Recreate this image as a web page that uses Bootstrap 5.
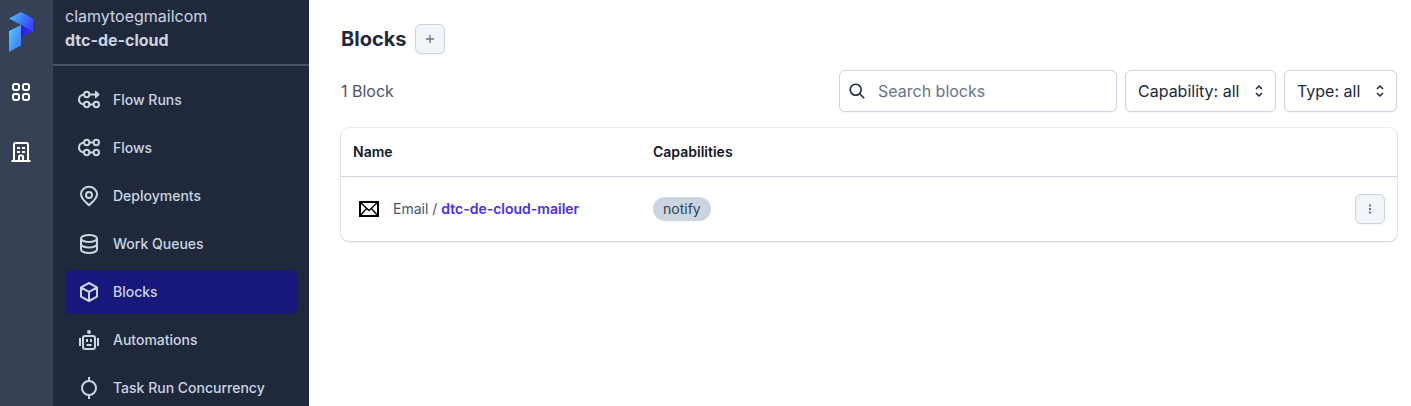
<!DOCTYPE html>
<html lang="en">
<head>
<meta charset="utf-8">
<meta name="viewport" content="width=device-width, initial-scale=1">
<title>Blocks</title>
<link href="https://cdn.jsdelivr.net/npm/bootstrap@5.3.0/dist/css/bootstrap.min.css" rel="stylesheet">
<style>
body{font-family:Inter,"Liberation Sans",sans-serif;font-size:16px;line-height:24px;color:#1e293b;height:100vh;overflow:hidden;background:#fff}
svg{display:block;flex:none}
.rail{width:53px;background:#374155;color:#fff}
.rail .logo{margin:12px 0 0 9px}
.rail .apps{margin:28px 0 0 9px}
.rail .org{margin:36px 0 0 9px}
.side{width:256px;background:#20293b;color:#cbd5e1}
.account{height:66px;padding:4px 12px 0;border-bottom:2px solid #475569}
.menu{padding:12px 12px 0;gap:4px}
.menu .nav-link{height:44px;padding:0 12px;gap:12px;font-size:14px;line-height:20px;font-weight:500;color:#cbd5e1;border-radius:6px}
.menu .nav-link.active{background:#18187c}
.page{padding:24px 14px 0 32px}
.page h1{font-size:20px;line-height:28px;font-weight:700;margin:0}
.sq{width:30px;height:30px;border:1px solid #cbd5e1;border-radius:6px;background:#f1f5f9;color:#64748b;box-shadow:0 1px 2px rgba(0,0,0,.05)}
.tools{margin-top:16px;height:42px}
.muted{color:#475569}
.field{height:42px;border:1px solid #cbd5e1;border-radius:6px;box-shadow:0 1px 2px rgba(0,0,0,.05);background:#fff;color:#1e293b}
.search{width:278px;padding-left:7px;gap:11px}
.search input{color:#1e293b;font-size:16px;line-height:24px;padding:0}
.search input::placeholder{color:#64748b;opacity:1}
.pick{padding:0 6px 0 12px}
.panel{margin-top:16px;height:113px;border-radius:8px;box-shadow:0 0 0 1px rgba(0,0,0,.08),0 1px 2px rgba(0,0,0,.12);font-size:14px;line-height:20px}
.cols{height:49px;border-bottom:1px solid #cbd5e1;font-weight:600;color:#111827}
.cols,.item{padding:0 12px}
.c1{width:300px}
.item .c1{gap:12px}
.item a{color:#4b2ef5;font-weight:600;text-decoration:none}
.tag{height:24px;padding:0 10px;background:#cbd5e1;color:#334155}
</style>
</head>
<body class="d-flex">
<aside class="rail flex-shrink-0">
  <svg class="logo" width="24" height="40" viewBox="0 0 24 40">
    <defs>
      <linearGradient id="top" x1="0" y1="0" x2="1" y2=".55"><stop stop-color="#55cdfc"/><stop offset=".55" stop-color="#3d7fff"/><stop offset="1" stop-color="#3d48ff"/></linearGradient>
      <linearGradient id="leg" x1="0" y1="0" x2="1" y2="1"><stop stop-color="#55cfff"/><stop offset="1" stop-color="#3a70ff"/></linearGradient>
      <linearGradient id="fold"><stop stop-color="#2e1cc8"/><stop offset="1" stop-color="#3b30ff"/></linearGradient>
    </defs>
    <path d="M0 6.500 12 0l12 6.500v12.700L12 13z" fill="url(#top)"/>
    <path d="M12 13l12 6.200L12 25z" fill="url(#fold)"/>
    <path d="M0 19l12-6v20.500L0 40z" fill="url(#leg)"/>
  </svg>
  <svg class="apps" width="24" height="24" viewBox="0 0 24 24" fill="none" stroke="currentColor" stroke-width="2"><rect x="4" y="4" width="6" height="6" rx="2"/><rect x="14" y="4" width="6" height="6" rx="2"/><rect x="4" y="14" width="6" height="6" rx="2"/><rect x="14" y="14" width="6" height="6" rx="2"/></svg>
  <svg class="org" width="24" height="24" viewBox="0 0 24 24" fill="none" stroke="currentColor" stroke-width="2"><path d="M2.500 21h19M5 21V4.500a1.500 1.500 0 0 1 1.500-1.500h11a1.500 1.500 0 0 1 1.500 1.500V21M10 21v-4.500a1 1 0 0 1 1-1h2a1 1 0 0 1 1 1V21M8 8h3M13 8h3M8 12h3M13 12h3"/></svg>
</aside>
<aside class="side flex-shrink-0">
  <div class="account"><div>clamytoegmailcom</div><div class="fw-bold">dtc-de-cloud</div></div>
  <nav class="menu nav flex-column flex-nowrap">
    <a class="nav-link d-flex align-items-center" href="#"><svg width="24" height="24" viewBox="0 0 24 24" fill="none" stroke="currentColor" stroke-width="2"><circle cx="9.700" cy="6.500" r="2.700"/><circle cx="9.700" cy="16.500" r="2.700"/><circle cx="19.300" cy="16.500" r="2.700"/><path d="M7 6.500C3.500 7 2 9 2 11.500s1.500 4.500 5 5M12.400 6.500H19M12.400 16.500h4.200"/><path d="M18.500 3 22.300 6.500l-3.800 3.500z" fill="currentColor" stroke-width="1"/></svg>Flow Runs</a>
    <a class="nav-link d-flex align-items-center" href="#"><svg width="24" height="24" viewBox="0 0 24 24" fill="none" stroke="currentColor" stroke-width="2"><circle cx="9.700" cy="6.500" r="2.700"/><circle cx="19.300" cy="6.500" r="2.700"/><circle cx="9.700" cy="16.500" r="2.700"/><circle cx="19.300" cy="16.500" r="2.700"/><path d="M7 6.500C3.500 7 2 9 2 11.500s1.500 4.500 5 5M12.400 6.500h4.200M12.400 16.500h4.200"/></svg>Flows</a>
    <a class="nav-link d-flex align-items-center" href="#"><svg width="24" height="24" viewBox="0 0 24 24" fill="none" stroke="currentColor" stroke-width="2" stroke-linejoin="round"><path d="M12 21.200c-2.600-2.100-8-6.200-8-11.100a8 7.300 0 0 1 16 0c0 4.900-5.400 9-8 11.100z"/><circle cx="12" cy="11" r="3"/></svg>Deployments</a>
    <a class="nav-link d-flex align-items-center" href="#"><svg width="24" height="24" viewBox="0 0 24 24" fill="none" stroke="currentColor" stroke-width="2"><ellipse cx="12" cy="6.500" rx="8" ry="3.500"/><path d="M4 6.500v11c0 1.900 3.600 3.500 8 3.500s8-1.600 8-3.500v-11M4 12c0 1.900 3.600 3.500 8 3.500s8-1.600 8-3.500"/></svg>Work Queues</a>
    <a class="nav-link active d-flex align-items-center" href="#"><svg width="24" height="24" viewBox="0 0 24 24" fill="none" stroke="currentColor" stroke-width="2" stroke-linejoin="round"><path d="M12 3l8 4.300v9.400L12 21l-8-4.300V7.300zM4 7.500l8 4.300 8-4.300M12 11.800V21"/></svg>Blocks</a>
    <a class="nav-link d-flex align-items-center" href="#"><svg width="24" height="24" viewBox="0 0 24 24" fill="none" stroke="currentColor" stroke-width="2"><rect x="6" y="8" width="12" height="13" rx="2"/><path d="M3 10v8M21 10v8M10 11v3M14 11v3M9.500 17h5"/><circle cx="12" cy="4" r="2" fill="currentColor" stroke="none"/></svg>Automations</a>
    <a class="nav-link d-flex align-items-center" href="#"><svg width="24" height="24" viewBox="0 0 24 24" fill="none" stroke="currentColor" stroke-width="2"><circle cx="12" cy="12" r="7"/><path d="M12 1v4M12 19v4"/></svg>Task Run Concurrency</a>
  </nav>
</aside>
<main class="page flex-grow-1">
  <div class="d-flex align-items-center gap-2">
    <h1>Blocks</h1>
    <button class="sq p-0 d-flex align-items-center justify-content-center" aria-label="Add"><svg width="10" height="10" viewBox="0 0 10 10" fill="none" stroke="currentColor" stroke-width="1.300"><path d="M5 1v8M1 5h8"/></svg></button>
  </div>
  <div class="tools d-flex align-items-center gap-2">
    <span class="muted me-auto">1 Block</span>
    <label class="field search d-flex align-items-center"><svg width="20" height="20" viewBox="0 0 20 20" fill="none" stroke="currentColor" stroke-width="1.600"><circle cx="8.700" cy="8.700" r="5.500"/><path d="M12.700 12.700l4.500 4.500"/></svg><input class="border-0 bg-transparent" type="text" placeholder="Search blocks" aria-label="Search blocks"></label>
    <button class="field pick d-flex align-items-center justify-content-between" style="width:151px">Capability: all<svg width="20" height="20" viewBox="0 0 20 20" fill="none" stroke="currentColor" stroke-width="1.500"><path d="M7 8l3-3 3 3M7 12l3 3 3-3"/></svg></button>
    <button class="field pick d-flex align-items-center justify-content-between" style="width:113px">Type: all<svg width="20" height="20" viewBox="0 0 20 20" fill="none" stroke="currentColor" stroke-width="1.500"><path d="M7 8l3-3 3 3M7 12l3 3 3-3"/></svg></button>
  </div>
  <section class="panel">
    <div class="cols d-flex align-items-center"><div class="c1">Name</div><div>Capabilities</div></div>
    <div class="item d-flex align-items-center" style="height:64px">
      <div class="c1 d-flex align-items-center"><svg class="ms-1" width="24" height="24" viewBox="0 0 24 24" fill="none" stroke="#000"><path d="M3 5h18v14H3z" stroke-width="2"/><path d="M3 5l9 8.500L21 5M3 19l6.500-7.500M21 19l-6.500-7.500" stroke-width="1.400"/></svg><span class="muted">Email / <a href="#">dtc-de-cloud-mailer</a></span></div>
      <span class="tag rounded-pill d-flex align-items-center">notify</span>
      <button class="sq p-0 ms-auto d-flex align-items-center justify-content-center" aria-label="More"><svg width="10" height="10" viewBox="0 0 10 10" fill="currentColor"><path d="M4 0.500h2v2H4zM4 4h2v2H4zM4 7.500h2v2H4z"/></svg></button>
    </div>
  </section>
</main>
<script src="https://cdn.jsdelivr.net/npm/bootstrap@5.3.0/dist/js/bootstrap.bundle.min.js"></script>
</body>
</html>
